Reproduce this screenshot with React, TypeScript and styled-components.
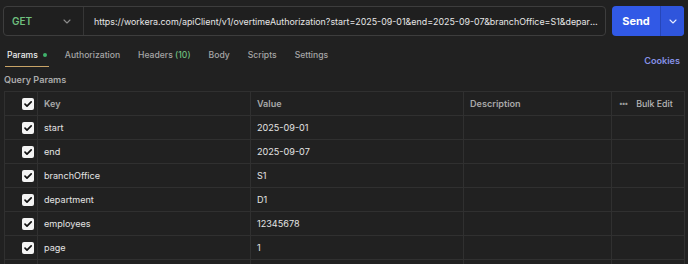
import React from "react";
import styled, { createGlobalStyle } from "styled-components";

const GlobalStyle = createGlobalStyle`
  html, body {
    margin: 0;
    padding: 0;
    background: #212121;
    overflow: hidden;
  }
  body {
    font-family: Inter, "Noto Sans", sans-serif;
    -webkit-font-smoothing: antialiased;
  }
`;

const Page = styled.div`
  width: 688px;
  height: 264px;
  background: #212121;
  overflow: hidden;
`;

const TopBar = styled.div`
  display: flex;
  align-items: stretch;
  gap: 6px;
  padding: 6px 4px 0 3px;
  height: 30px;
`;

const UrlBox = styled.div`
  flex: 1;
  min-width: 0;
  display: flex;
  align-items: center;
  border: 1px solid #3d3d3d;
  border-radius: 4px;
  background: #1f1f1f;
`;

const MethodPicker = styled.div`
  width: 80px;
  flex-shrink: 0;
  display: flex;
  align-items: center;
  justify-content: space-between;
  padding: 0 12px 0 8px;
  box-sizing: border-box;
  height: 100%;
  border-right: 1px solid #363636;
`;

const Method = styled.span`
  color: #6fbf7e;
  font-size: 10px;
  font-weight: 600;
`;

const UrlText = styled.div`
  flex: 1;
  min-width: 0;
  padding: 0 6px 0 10px;
  color: #e6e6e6;
  font-size: 8.9px;
  white-space: nowrap;
  overflow: hidden;
  text-overflow: ellipsis;
`;

const SendGroup = styled.div`
  width: 72px;
  flex-shrink: 0;
  display: flex;
  border-radius: 4px;
  overflow: hidden;
  background: #3159e6;
`;

const SendButton = styled.div`
  flex: 1;
  display: flex;
  align-items: center;
  justify-content: center;
  color: #ffffff;
  font-size: 11px;
  font-weight: 700;
`;

const SendMenu = styled.div`
  width: 23px;
  display: flex;
  align-items: center;
  justify-content: center;
  border-left: 1px solid #2646b8;
  background: #2f55dc;
`;

const TabsRow = styled.div`
  display: flex;
  align-items: flex-end;
  justify-content: space-between;
  padding: 0 8px 0 5px;
  margin-top: 8px;
  height: 23px;
`;

const Tabs = styled.div`
  display: flex;
  align-items: stretch;
  gap: 14px;
  height: 100%;
`;

const Tab = styled.div<{ $active?: boolean }>`
  display: flex;
  align-items: center;
  gap: 5px;
  padding: 0 2px;
  font-size: 8.6px;
  font-weight: 500;
  color: ${(p) => (p.$active ? "#ececec" : "#a6a6a6")};
  border-bottom: 1.5px solid ${(p) => (p.$active ? "#c9a467" : "transparent")};
  box-sizing: border-box;
`;

const Dot = styled.span`
  width: 4px;
  height: 4px;
  border-radius: 50%;
  background: #3fb26b;
`;

const Count = styled.span`
  color: #6fbf7e;
`;

const Cookies = styled.div`
  align-self: center;
  margin-top: 10px;
  color: #8691e6;
  font-size: 9.1px;
  font-weight: 600;
`;

const SectionTitle = styled.div`
  padding: 5px 0 0 4px;
  height: 19px;
  box-sizing: border-box;
  color: #ababab;
  font-size: 9.1px;
  font-weight: 600;
  display: flex;
  align-items: center;
`;

const Table = styled.div`
  margin: 5px 0 0 4px;
  width: 680px;
  display: grid;
  grid-template-columns: 33px 213px 213px 148px 73px;
  border-top: 1px solid #303030;
  border-left: 1px solid #303030;
`;

const Cell = styled.div<{ $head?: boolean }>`
  height: 24px;
  box-sizing: border-box;
  border-right: 1px solid #303030;
  border-bottom: 1px solid #303030;
  display: flex;
  align-items: center;
  padding-left: 6px;
  font-size: 9.1px;
  font-weight: ${(p) => (p.$head ? 600 : 400)};
  color: ${(p) => (p.$head ? "#a8a8a8" : "#e4e4e4")};
  white-space: nowrap;
`;

const CheckCell = styled(Cell)`
  justify-content: flex-end;
  padding: 0 3px 0 0;
`;

const Box = styled.div`
  width: 12px;
  height: 12px;
  border-radius: 2px;
  background: #f4f4f4;
  display: flex;
  align-items: center;
  justify-content: center;
`;

const BulkCell = styled(Cell)`
  gap: 9px;
  padding-left: 7px;
  color: #b8b8b8;
  font-weight: 500;
  font-size: 8.8px;
`;

const Dots = styled.span`
  color: #9a9a9a;
  letter-spacing: -1px;
  font-size: 7px;
`;

const Chevron = ({ color }: { color: string }) => (
  <svg width="8" height="5" viewBox="0 0 8 5">
    <path d="M1 1l3 3 3-3" fill="none" stroke={color} strokeWidth="1.1" strokeLinecap="round" strokeLinejoin="round" />
  </svg>
);

const Check = () => (
  <Box>
    <svg width="10" height="10" viewBox="0 0 10 10">
      <path d="M2 5.2l2 2 4.2-4.4" fill="none" stroke="#111" strokeWidth="1.7" strokeLinecap="round" strokeLinejoin="round" />
    </svg>
  </Box>
);

const params = [
  { key: "start", value: "2025-09-01" },
  { key: "end", value: "2025-09-07" },
  { key: "branchOffice", value: "S1" },
  { key: "department", value: "D1" },
  { key: "employees", value: "12345678" },
  { key: "page", value: "1" },
];

const url =
  "https://workera.com/apiClient/v1/overtimeAuthorization?start=2025-09-01&end=2025-09-07&branchOffice=S1&department=D1&employees=12345678&page=1";

export default function App() {
  return (
    <Page>
      <GlobalStyle />
      <TopBar>
        <UrlBox>
          <MethodPicker>
            <Method>GET</Method>
            <Chevron color="#8c8c8c" />
          </MethodPicker>
          <UrlText>{url}</UrlText>
        </UrlBox>
        <SendGroup>
          <SendButton>Send</SendButton>
          <SendMenu>
            <Chevron color="#e8ecff" />
          </SendMenu>
        </SendGroup>
      </TopBar>

      <TabsRow>
        <Tabs>
          <Tab $active>
            Params <Dot />
          </Tab>
          <Tab>Authorization</Tab>
          <Tab>
            <span>
              Headers <Count>(10)</Count>
            </span>
          </Tab>
          <Tab>Body</Tab>
          <Tab>Scripts</Tab>
          <Tab>Settings</Tab>
        </Tabs>
        <Cookies>Cookies</Cookies>
      </TabsRow>

      <SectionTitle>Query Params</SectionTitle>

      <Table>
        <CheckCell $head>
          <Check />
        </CheckCell>
        <Cell $head>Key</Cell>
        <Cell $head>Value</Cell>
        <Cell $head>Description</Cell>
        <BulkCell $head>
          <Dots>•••</Dots>
          Bulk Edit
        </BulkCell>
        {params.map((p) => (
          <React.Fragment key={p.key}>
            <CheckCell>
              <Check />
            </CheckCell>
            <Cell>{p.key}</Cell>
            <Cell>{p.value}</Cell>
            <Cell />
            <Cell />
          </React.Fragment>
        ))}
        <CheckCell />
        <Cell />
        <Cell />
        <Cell />
        <Cell />
      </Table>
    </Page>
  );
}
